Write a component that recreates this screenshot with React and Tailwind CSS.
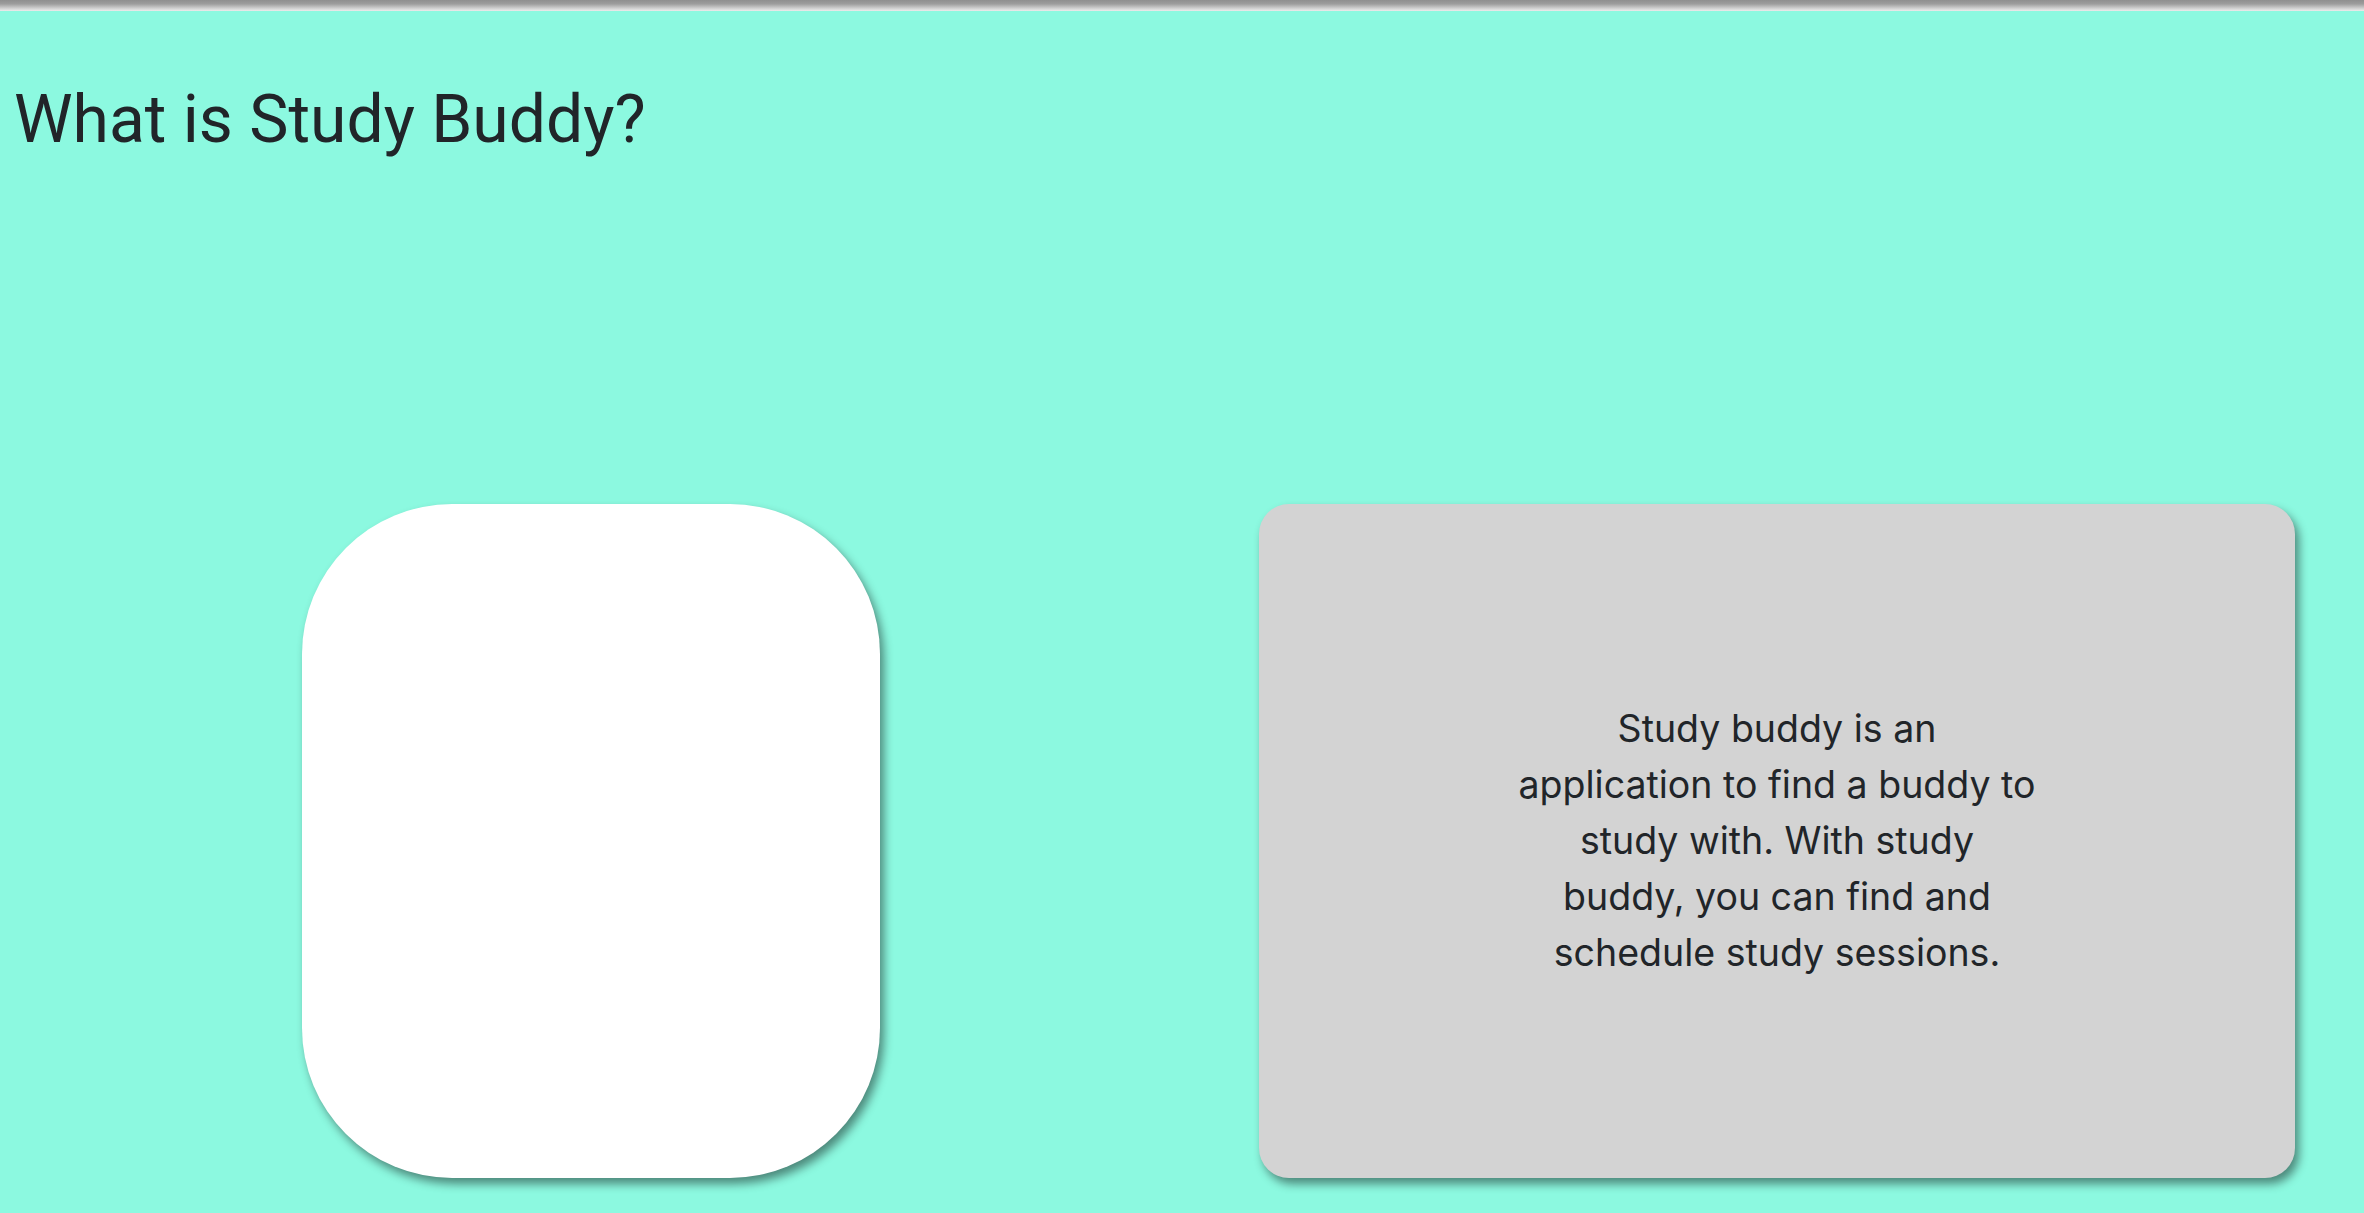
export default function App() {
  return (
    <div className="min-h-[1213px] bg-[#8cf9e0] font-['Inter','Liberation_Sans',sans-serif] text-[#212529]">
      <div className="h-[11px] bg-[linear-gradient(to_bottom,#8f8f8f_0%,#9c9c9c_35%,#cfcfcf_75%,#ececec_100%)]" />

      <h1 className="mt-[76px] pl-[14px] font-['Roboto','Liberation_Sans',sans-serif] text-[66px] leading-none font-normal">
        What is Study Buddy?
      </h1>

      <div className="mt-[351px] grid grid-cols-2">
        <div className="flex justify-center">
          <div className="w-[578px] h-[674px] rounded-[150px] bg-white shadow-[4px_6px_10px_rgba(0,0,0,0.45)]" />
        </div>
        <div className="flex justify-center pl-[8px]">
          <div className="w-[1036px] h-[674px] rounded-[30px] bg-[#d3d3d3] shadow-[4px_6px_10px_rgba(0,0,0,0.45)] flex items-center justify-center">
            <p className="w-[519px] text-center text-[37.5px] leading-[56px]">
              Study buddy is an application to find a buddy to study with. With study buddy, you can find and schedule study sessions.
            </p>
          </div>
        </div>
      </div>
    </div>
  );
}
